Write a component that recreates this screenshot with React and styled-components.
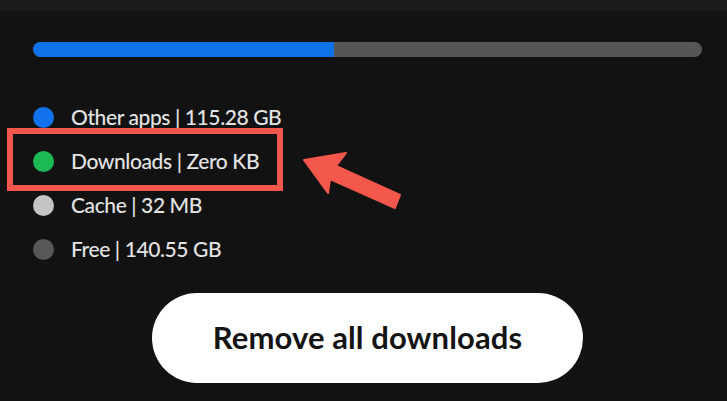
import React from "react";
import styled, { createGlobalStyle } from "styled-components";

const Global = createGlobalStyle`
  html, body { margin: 0; padding: 0; background: #121212; }
  body { width: 727px; height: 401px; overflow: hidden; font-family: Lato, "Noto Sans", sans-serif; }
`;

const Page = styled.div`
  position: relative;
  width: 727px;
  height: 401px;
  background: #121212;
  display: flex;
  flex-direction: column;
`;

const TopStrip = styled.div`
  height: 11px;
  background: #1b1b1b;
`;

const Content = styled.div`
  display: flex;
  flex-direction: column;
  padding: 31px 25px 0 33px;
`;

const Bar = styled.div`
  display: flex;
  height: 15px;
  border-radius: 8px;
  overflow: hidden;
  background: #565656;
`;

const BarFill = styled.div`
  background: #0f72ea;
`;

const Legend = styled.ul`
  list-style: none;
  margin: 38px 0 0 0;
  padding: 0;
  display: flex;
  flex-direction: column;
`;

const Row = styled.li`
  height: 44px;
  display: flex;
  align-items: center;
  gap: 17px;
`;

const Dot = styled.span`
  width: 21px;
  height: 21px;
  border-radius: 50%;
  background: ${(p) => p.$color};
  flex: none;
`;

const Label = styled.span`
  color: #e4e4e4;
  font-size: 21px;
  font-weight: 500;
  letter-spacing: -0.4px;
  padding-bottom: 1px;
`;

const ButtonWrap = styled.div`
  display: flex;
  justify-content: center;
  margin-top: 22px;
`;

const Button = styled.button`
  width: 431px;
  height: 90px;
  border: none;
  border-radius: 45px;
  background: #ffffff;
  color: #141414;
  font-family: Lato, "Noto Sans", sans-serif;
  font-weight: 700;
  font-size: 31px;
  letter-spacing: 0.1px;
  padding: 0 0 2px 0;
`;

const Highlight = styled.div`
  position: absolute;
  left: 7px;
  top: 128px;
  width: 276px;
  height: 63px;
  box-sizing: border-box;
  border: 6px solid #f4574b;
`;

const ArrowSvg = styled.svg`
  position: absolute;
  left: 0;
  top: 0;
  pointer-events: none;
`;

const items = [
  { color: "#1271ec", text: "Other apps | 115.28 GB" },
  { color: "#1db954", text: "Downloads | Zero KB" },
  { color: "#c4c4c4", text: "Cache | 32 MB" },
  { color: "#575757", text: "Free | 140.55 GB" },
];

export default function App() {
  return (
    <Page>
      <Global />
      <TopStrip />
      <Content>
        <Bar>
          <BarFill style={{ width: "45%" }} />
        </Bar>
        <Legend>
          {items.map((it) => (
            <Row key={it.text}>
              <Dot $color={it.color} />
              <Label>{it.text}</Label>
            </Row>
          ))}
        </Legend>
        <ButtonWrap>
          <Button>Remove all downloads</Button>
        </ButtonWrap>
      </Content>
      <Highlight />
      <ArrowSvg width="727" height="401" viewBox="0 0 727 401">
        <polygon
          fill="#f4574b"
          stroke="#f4574b"
          strokeWidth="2"
          strokeLinejoin="round"
          points="304,160 346,153 336,166 400,195 395,208 330,179 328,193"
        />
      </ArrowSvg>
    </Page>
  );
}
